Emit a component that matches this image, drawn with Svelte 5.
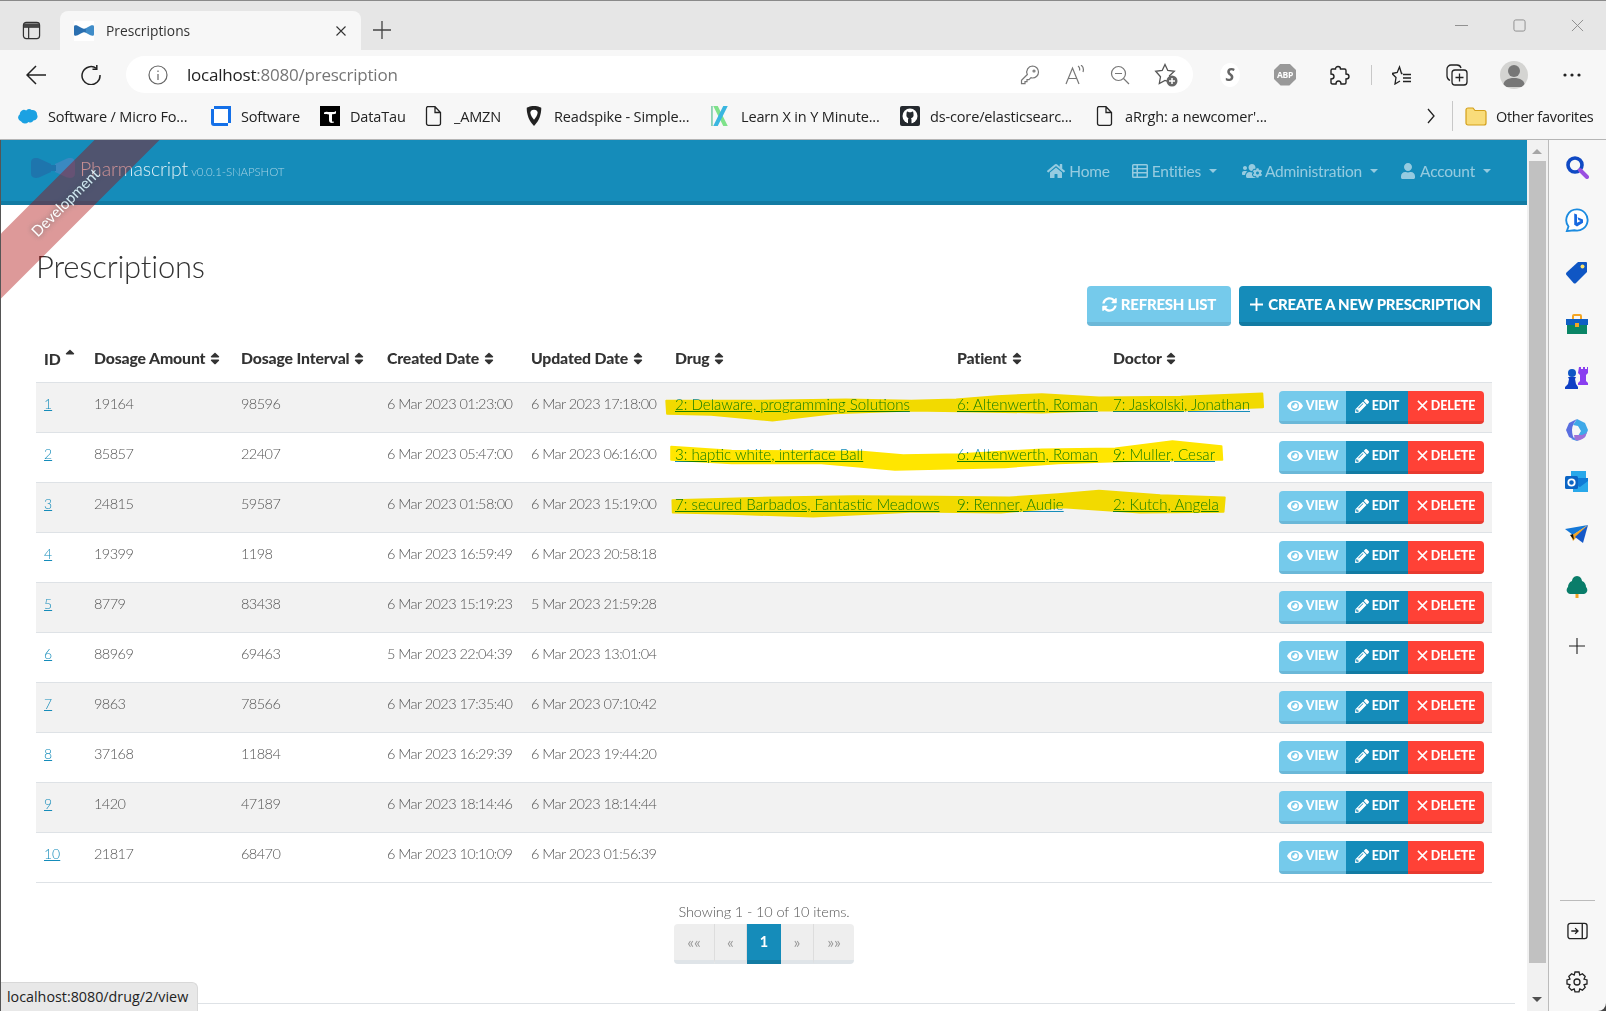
<script>
  const rows = [
    [1, 19164, 98596, '6 Mar 2023 01:23:00', '6 Mar 2023 17:18:00', '2: Delaware, programming Solutions', '6: Altenwerth, Roman', '7: Jaskolski, Jonathan'],
    [2, 85857, 22407, '6 Mar 2023 05:47:00', '6 Mar 2023 06:16:00', '3: haptic white, interface Ball', '6: Altenwerth, Roman', '9: Muller, Cesar'],
    [3, 24815, 59587, '6 Mar 2023 01:58:00', '6 Mar 2023 15:19:00', '7: secured Barbados, Fantastic Meadows', '9: Renner, Audie', '2: Kutch, Angela'],
    [4, 19399, 1198, '6 Mar 2023 16:59:49', '6 Mar 2023 20:58:18', '', '', ''],
    [5, 8779, 83438, '6 Mar 2023 15:19:23', '5 Mar 2023 21:59:28', '', '', ''],
    [6, 88969, 69463, '5 Mar 2023 22:04:39', '6 Mar 2023 13:01:04', '', '', ''],
    [7, 9863, 78566, '6 Mar 2023 17:35:40', '6 Mar 2023 07:10:42', '', '', ''],
    [8, 37168, 11884, '6 Mar 2023 16:29:39', '6 Mar 2023 19:44:20', '', '', ''],
    [9, 1420, 47189, '6 Mar 2023 18:14:46', '6 Mar 2023 18:14:44', '', '', ''],
    [10, 21817, 68470, '6 Mar 2023 10:10:09', '6 Mar 2023 01:56:39', '', '', '']
  ];
  const heads = ['Dosage Amount', 'Dosage Interval', 'Created Date', 'Updated Date', 'Drug', 'Patient', 'Doctor'];
  const sortD = 'M41 288h238c21.4 0 32.1 25.9 17 41L177 448c-9.4 9.4-24.6 9.4-33.9 0L24 329c-15.1-15.1-4.4-41 17-41zm255-105L177 64c-9.4-9.4-24.6-9.4-33.9 0L24 183c-15.1 15.1-4.4 41 17 41h238c21.4 0 32.1-25.9 17-41z';
  const eyeD = 'M572.52 241.4C518.29 135.59 410.93 64 288 64S57.68 135.64 3.48 241.41a32.35 32.35 0 0 0 0 29.19C57.71 376.41 165.07 448 288 448s230.32-71.64 284.52-177.41a32.35 32.35 0 0 0 0-29.19zM288 400a144 144 0 1 1 144-144 143.93 143.93 0 0 1-144 144zm0-240a95.31 95.31 0 0 0-25.31 3.79 47.85 47.85 0 0 1-66.9 66.9A95.78 95.78 0 1 0 288 160z';
  const penD = 'M497.9 142.1l-46.1 46.1c-4.7 4.7-12.3 4.7-17 0l-111-111c-4.7-4.7-4.7-12.3 0-17l46.1-46.1c18.7-18.7 49.1-18.7 67.9 0l60.1 60.1c18.8 18.7 18.8 49.1 0 67.9zM284.2 99.8L21.6 362.4.4 483.9c-2.9 16.4 11.4 30.6 27.8 27.8l121.5-21.3 262.6-262.6c4.7-4.7 4.7-12.3 0-17l-111-111c-4.8-4.7-12.4-4.7-17.1 0zM124.1 339.9c-5.5-5.5-5.5-14.3 0-19.8l154-154c5.5-5.5 14.3-5.5 19.8 0s5.5 14.3 0 19.8l-154 154c-5.5 5.5-14.3 5.5-19.8 0zM88 424h48v36.3l-64.5 11.3-31.1-31.1L51.7 376H88v48z';
</script>

<div class="win">
  <div class="tabs">
    <svg class="tabside" viewBox="0 0 20 20" fill="none" stroke="#333" stroke-width="1.3"><rect x="1.5" y="1.5" width="17" height="17" rx="3"/><path d="M7 6.5v12M1.5 6.5h17" /><path d="M2 2.5h16v4H2z" fill="#444" stroke="none"/></svg>
    <div class="tab">
      <span class="fav"><svg viewBox="0 0 22 12" width="21" height="11"><path d="M0 2C0 0 2 0 4 .8L10 4v4l-6 3.2C2 12 0 12 0 10z" fill="#2a6fb0"/><path d="M22 2c0-2-2-2-4-1.200L12 4v4l6 3.200c2 .8 4 .8 4-1.200z" fill="#3f8cc8"/><rect x="9" y="4" width="4" height="4" fill="#2a6fb0"/></svg></span>
      <span class="tabtitle">Prescriptions</span>
      <svg class="tabx" viewBox="0 0 10 10" stroke="#333" stroke-width="1.100"><path d="M0.500 0.500l9 9M9.500 0.500l-9 9"/></svg>
    </div>
    <svg class="tabplus" viewBox="0 0 18 18" stroke="#444" stroke-width="1.300"><path d="M9 0v18M0 9h18"/></svg>
    <div class="winctl">
      <svg viewBox="0 0 14 14" stroke="#8a8a8a" stroke-width="1" fill="none"><path d="M0 7h14"/></svg>
      <svg viewBox="0 0 14 14" stroke="#8a8a8a" stroke-width="1" fill="none"><rect x="1" y="1" width="12" height="12" rx="2"/></svg>
      <svg viewBox="0 0 14 14" stroke="#8a8a8a" stroke-width="1" fill="none"><path d="M1 1l12 12M13 1L1 13"/></svg>
    </div>
  </div>

  <div class="toolbar">
    <svg class="tb back" viewBox="0 0 20 20" fill="none" stroke="#222" stroke-width="1.500"><path d="M20 10H1M10 1l-9 9 9 9"/></svg>
    <svg class="tb reload" viewBox="0 0 20 20" fill="none" stroke="#222" stroke-width="1.500"><path d="M15.500 3.500A9 9 0 1 0 19 10"/><path d="M15.800 0v4.200h-4.300" /></svg>
    <div class="pill">
      <svg class="info" viewBox="0 0 20 20" fill="none" stroke="#666" stroke-width="1.200"><circle cx="10" cy="10" r="9"/><path d="M10 9v6M10 5.500v1.500"/></svg>
      <span class="url"><b>localhost</b>:8080/prescription</span>
      <div class="pillicons">
        <svg viewBox="0 0 20 20" fill="none" stroke="#777" stroke-width="1.200"><path d="M12.500 1a6 6 0 0 1 0 12l-1.500-.3-2 2H7v2H5v2H1.500v-3.500L7.300 9.500A6 6 0 0 1 12.500 1z"/><circle cx="14" cy="6" r="1"/></svg>
        <svg viewBox="0 0 20 20" fill="none" stroke="#777" stroke-width="1.200"><path d="M1 19L7.500 3 14 19M3.500 13.500h8M13 1c1.500 1 2 2.500 1.500 4.500M16 0c2 1.500 3 4 2 7"/></svg>
        <svg viewBox="0 0 20 20" fill="none" stroke="#777" stroke-width="1.200"><circle cx="8.500" cy="8.500" r="7"/><path d="M13.500 13.500L19 19M5 8.500h7"/></svg>
        <svg viewBox="0 0 24 24" fill="none" stroke="#555" stroke-width="1.300"><path d="M11 1.500l2.800 6 6.500.8-4.800 4.500 1.200 6.400L11 17.500l-5.700 3 1.200-6.700L1.700 8.300l6.500-.8z"/><circle cx="18" cy="18" r="5.500" fill="#666" stroke="none"/><path d="M18 15v6M15 18h6" stroke="#fff" stroke-width="1.500"/></svg>
      </div>
    </div>
    <div class="exts">
      <span class="extS">S</span>
      <span class="extA">ABP</span>
      <svg class="ic" viewBox="0 0 20 20" fill="none" stroke="#222" stroke-width="1.400"><path d="M8 1.500c1.500 0 2.500 1 2.500 2.500h4c1 0 1.500.5 1.500 1.500V9c2 0 3 1 3 2.500S18 14 16 14v3.500c0 1-.5 1.500-1.500 1.500H11c0-2-1-3-2.500-3S6 17 6 19H2.500C1.500 19 1 18.500 1 17.500V14c2 0 3-1 3-2.500S3 9 1 9V5.500c0-1 .5-1.500 1.500-1.500h3c0-1.500 1-2.500 2.500-2.500z"/></svg>
      <span class="tbdiv"></span>
      <svg class="ic" viewBox="0 0 20 20" fill="none" stroke="#222" stroke-width="1.300"><path d="M10.500 8.500h-1l-2-6.500-2.300 5.500L0 8.500l4 4L3 19l5-3M11 9.500h8M11 13h8M11 16.500h8" /></svg>
      <svg class="ic wide" viewBox="0 0 22 22" fill="none" stroke="#222" stroke-width="1.300"><rect x="6" y="6" width="15" height="15" rx="3"/><path d="M13.500 9.500v8M9.500 13.500h8M4 16.500C2 15.500 1 14 1 12V5c0-2 2-4 4-4h6c2 0 3.500 1 4 3"/></svg>
      <span class="avatar"><svg viewBox="0 0 28 28" width="28" height="28"><circle cx="14" cy="10" r="6" fill="#777"/><path d="M3 26c0-7 5-9 11-9s11 2 11 9z" fill="#777"/></svg></span>
      <svg class="dots" viewBox="0 0 18 4" fill="#222"><circle cx="2" cy="2" r="1.600"/><circle cx="9" cy="2" r="1.600"/><circle cx="16" cy="2" r="1.600"/></svg>
    </div>
  </div>

  <div class="bookmarks">
    <span class="bm"><svg viewBox="0 0 22 18" class="bi"><path d="M9 3a4 4 0 0 1 6-.5 5 5 0 0 1 6 5 4.500 4.500 0 0 1-4 6.500 4 4 0 0 1-5.500 1.500A5 5 0 0 1 3.500 15 4.500 4.500 0 0 1 2 7a4.500 4.500 0 0 1 7-4z" fill="#1ba1e2"/></svg>Software / Micro Fo...</span>
    <span class="bm"><svg viewBox="0 0 20 20" class="bi"><path d="M3 0h17v17h-3V3H3zM0 3h3v14h14v3H3a3 3 0 0 1-3-3z" fill="#1470e8"/><path d="M3 3h14v14H3z" fill="#fff"/></svg>Software</span>
    <span class="bm"><svg viewBox="0 0 20 20" class="bi"><rect width="20" height="20" fill="#000"/><path d="M4 6.500c2-1.500 4-.5 6-.5s4 .5 6-1v2.500c-1 .5-2.500 .8-4 .7v6c0 1.500 1 1.800 2 1.300v1c-3 1-5 0-5-2.500V8.500c-2-.2-3.500-.5-5-.5z" fill="#fff"/></svg>DataTau</span>
    <span class="bm"><svg viewBox="0 0 16 20" class="bi bd" fill="none" stroke="#222" stroke-width="1.300"><path d="M2 .7h7.500L15 6.500V17.500a1.800 1.800 0 0 1-1.800 1.800H2.800A1.800 1.800 0 0 1 1 17.500V2.500A1.800 1.800 0 0 1 2 .7zM9.500 .7v5.800H15"/></svg>_AMZN</span>
    <span class="bm"><svg viewBox="0 0 18 22" class="bi bp"><path d="M9 0c5 0 8 2 8 2 0 7-2 14-8 20C3 16 1 9 1 2c0 0 3-2 8-2z" fill="#222"/><path d="M9 4c3 0 4 1.500 4 3.500S11 13 9 15C7 13 5 9.500 5 7.500S6 4 9 4z" fill="#fff"/></svg>Readspike - Simple...</span>
    <span class="bm"><svg viewBox="0 0 20 22" class="bi bx"><path d="M0 0h1.200v22H0z" fill="#42b883"/><path d="M2 0h5l11 22h-5z" fill="#7fe28a"/><path d="M18 0h-5L2 22h5z" fill="#39b6e0"/></svg>Learn X in Y Minute...</span>
    <span class="bm"><svg viewBox="0 0 20 20" class="bi"><rect width="20" height="20" rx="2" fill="#24292e"/><circle cx="10" cy="10" r="7.500" fill="#fff"/><path d="M6.500 8c0-1 .3-2 .5-2.500.5 0 1.500.4 2 .8a6 6 0 0 1 2 0c.5-.4 1.500-.8 2-.8.2.5.5 1.500.5 2.500.6 2.500-1 4-2.500 4.200.3.4.5 1 .5 1.500V18H8v-4.300c0-.5.200-1.100.5-1.500C7.500 12 5.900 10.500 6.500 8z" fill="#24292e"/></svg>ds-core/elasticsearc...</span>
    <span class="bm"><svg viewBox="0 0 16 20" class="bi bd" fill="none" stroke="#222" stroke-width="1.300"><path d="M2 .7h7.500L15 6.500V17.500a1.800 1.800 0 0 1-1.800 1.800H2.800A1.800 1.800 0 0 1 1 17.500V2.500A1.800 1.800 0 0 1 2 .7zM9.500 .7v5.800H15"/></svg>aRrgh: a newcomer'...</span>
    <svg class="chev" viewBox="0 0 8 16" fill="none" stroke="#222" stroke-width="1.300"><path d="M1 1l6 7-6 7"/></svg>
    <span class="tbdiv thin"></span>
    <span class="bm other"><svg viewBox="0 0 22 20" class="bi"><path d="M1 4a2 2 0 0 1 2-2h5l2 2.500h9a2 2 0 0 1 2 2V17a2 2 0 0 1-2 2H3a2 2 0 0 1-2-2z" fill="#f9dc7a" stroke="#d39f19" stroke-width="1.200"/></svg>Other favorites</span>
  </div>

  <div class="main">
    <div class="page">
      <nav class="navbar">
        <div class="brand">
          <svg class="logo" viewBox="0 0 44 20"><path d="M0 5C0 0 4-.5 8 .5L20 6v8L8 19.500C4 20.500 0 20 0 15z" fill="#1f74ad"/><path d="M44 5c0-5-4-5.500-8-4.500L24 6v8l12 5.500c4 1 8 .5 8-4.500z" fill="#3c89c2"/><rect x="19" y="7" width="6" height="6" fill="#1f74ad"/></svg>
          <span class="bname">Pharmascript</span>
          <span class="bver">v0.0.1-SNAPSHOT</span>
        </div>
        <div class="navlinks">
          <span class="nl home"><svg viewBox="0 0 576 512" class="ni"><path d="M280.37 148.26L96 300.11V464a16 16 0 0 0 16 16l112.06-.29a16 16 0 0 0 15.92-16V368a16 16 0 0 1 16-16h64a16 16 0 0 1 16 16v95.64a16 16 0 0 0 16 16.05L464 480a16 16 0 0 0 16-16V300L295.67 148.26a12.19 12.19 0 0 0-15.3 0zM571.6 251.47L488 182.56V44.05a12 12 0 0 0-12-12h-56a12 12 0 0 0-12 12v72.61L318.47 43a48 48 0 0 0-61 0L4.34 251.47a12 12 0 0 0-1.6 16.9l25.5 31A12 12 0 0 0 45.15 301l235.22-193.74a12.19 12.19 0 0 1 15.3 0L530.9 301a12 12 0 0 0 16.9-1.6l25.5-31a12 12 0 0 0-1.7-16.93z"/></svg>Home</span>
          <span class="nl ent"><svg viewBox="0 0 16 14" class="ni th"><path d="M1.500 0h13A1.500 1.500 0 0 1 16 1.500v11a1.500 1.500 0 0 1-1.500 1.500h-13A1.500 1.500 0 0 1 0 12.500v-11A1.500 1.500 0 0 1 1.500 0zM1.500 1.500v2.500h3V1.500zm4.500 0v2.500h8.500V1.500zM1.500 5.500V8h3V5.500zm4.500 0V8h8.500V5.500zM1.500 9.500v3h3v-3zm4.500 0v3h8.500v-3z" fill-rule="evenodd"/></svg>Entities<i class="caret"></i></span>
          <span class="nl adm"><svg viewBox="0 0 640 512" class="ni uc"><path d="M610.5 341.3c2.6-14.1 2.6-28.5 0-42.6l25.8-14.9c3-1.7 4.3-5.2 3.3-8.5-6.7-21.6-18.2-41.2-33.2-57.4-2.3-2.5-6-3.1-9-1.4l-25.8 14.9c-10.9-9.3-23.4-16.5-36.9-21.3v-29.8c0-3.4-2.4-6.4-5.7-7.1-22.3-5-45-4.8-66.2 0-3.3.7-5.7 3.7-5.7 7.1v29.8c-13.5 4.8-26 12-36.9 21.3l-25.8-14.9c-2.9-1.7-6.7-1.1-9 1.4-15 16.2-26.5 35.8-33.2 57.4-1 3.3.4 6.8 3.3 8.5l25.8 14.9c-2.6 14.1-2.6 28.5 0 42.6l-25.8 14.9c-3 1.7-4.3 5.2-3.3 8.5 6.7 21.6 18.2 41.1 33.2 57.4 2.3 2.5 6 3.1 9 1.4l25.8-14.9c10.9 9.3 23.4 16.5 36.9 21.3v29.8c0 3.4 2.4 6.4 5.7 7.1 22.3 5 45 4.8 66.2 0 3.3-.7 5.7-3.7 5.7-7.1v-29.8c13.5-4.8 26-12 36.9-21.3l25.8 14.9c2.9 1.7 6.7 1.1 9-1.4 15-16.2 26.5-35.8 33.2-57.4 1-3.3-.4-6.8-3.3-8.5l-25.8-14.9zM496 368.5c-26.8 0-48.5-21.8-48.5-48.5s21.8-48.5 48.5-48.5 48.5 21.8 48.5 48.5-21.7 48.5-48.5 48.5zM96 224c35.3 0 64-28.7 64-64s-28.7-64-64-64-64 28.7-64 64 28.7 64 64 64zm224 32c1.9 0 3.7-.5 5.6-.6 8.3-21.7 20.5-42.1 36.3-59.2 7.4-8 17.9-12.6 28.9-12.6 6.9 0 13.7 1.8 19.6 5.3l7.9 4.6c.8-.5 1.6-.9 2.4-1.4 7-14.6 11.2-30.8 11.2-48 0-61.9-50.1-112-112-112S208 82.1 208 144c0 61.9 50.1 112 112 112zm105.2 194.5c-2.3-1.2-4.6-2.6-6.8-3.9-8.2 4.8-15.3 9.8-27.5 9.8-10.9 0-21.4-4.6-28.9-12.6-18.3-19.8-32.3-43.9-40.2-69.6-10.7-34.5 24.9-49.7 25.8-50.3-.1-2.6-.1-5.2 0-7.8l-7.9-4.6c-3.8-2.2-7-5-9.8-8.1-3.3.2-6.5.6-9.8.6-24.6 0-47.6-6-68.5-16h-8.3C179.6 288 128 339.6 128 403.2V432c0 26.5 21.5 48 48 48h255.4c-3.7-6-6.2-12.8-6.2-20.3v-9.2zM173.1 274.6C161.5 263.1 145.6 256 128 256H64c-35.3 0-64 28.7-64 64v32c0 17.7 14.3 32 32 32h65.9c6.3-47.4 34.9-87.3 75.2-109.4z"/></svg>Administration<i class="caret"></i></span>
          <span class="nl acc"><svg viewBox="0 0 448 512" class="ni ua"><path d="M224 256c70.7 0 128-57.3 128-128S294.7 0 224 0 96 57.3 96 128s57.3 128 128 128zm89.6 32h-16.7c-22.2 10.2-46.9 16-72.9 16s-50.6-5.8-72.9-16h-16.7C60.2 288 0 348.2 0 422.4V464c0 26.5 21.500 48 48 48h352c26.500 0 48-21.500 48-48v-41.600c0-74.200-60.200-134.400-134.400-134.400z"/></svg>Account<i class="caret"></i></span>
        </div>
      </nav>

      <div class="ribbon">Development</div>

      <div class="content">
        <h2>Prescriptions</h2>
        <div class="actions">
          <span class="btn info"><svg viewBox="0 0 512 512" class="bic"><path d="M370.72 133.28C339.458 104.008 298.888 87.962 255.848 88c-77.458.068-144.328 53.178-162.791 126.85-1.344 5.363-6.122 9.15-11.651 9.15H24.103c-7.498 0-13.194-6.807-11.807-14.176C33.933 94.924 134.813 8 256 8c66.448 0 126.791 26.136 171.315 68.685L463.03 40.97C478.149 25.851 504 36.559 504 57.941V192c0 13.255-10.745 24-24 24H345.941c-21.382 0-32.09-25.851-16.971-40.971l41.75-41.749zM32 296h134.059c21.382 0 32.09 25.851 16.971 40.971l-41.75 41.75c31.262 29.273 71.835 45.319 114.876 45.28 77.418-.07 144.315-53.144 162.787-126.849 1.344-5.363 6.122-9.15 11.651-9.15h57.304c7.498 0 13.194 6.807 11.807 14.176C478.067 417.076 377.187 504 256 504c-66.448 0-126.791-26.136-171.315-68.685L48.97 471.03C33.851 486.149 8 475.441 8 454.059V320c0-13.255 10.745-24 24-24z"/></svg>REFRESH LIST</span>
          <span class="btn primary"><svg viewBox="0 0 14 14" class="bic plus" stroke="#fff" stroke-width="2"><path d="M7 0v14M0 7h14"/></svg>CREATE A NEW PRESCRIPTION</span>
        </div>

        <div class="tablewrap">
          <table>
            <colgroup>
              <col class="c1" /><col class="c2" /><col class="c3" /><col class="c4" /><col class="c5" /><col class="c6" /><col class="c7" /><col class="c8" /><col />
            </colgroup>
            <thead>
              <tr>
                <th>ID <svg viewBox="0 0 320 512" class="sort up"><path d="M279 224H41c-21.4 0-32.1-25.9-17-41L143 64c9.4-9.4 24.6-9.4 33.9 0l119 119c15.2 15.1 4.5 41-16.9 41z"/></svg></th>
                {#each heads as h}
                  <th>{h} <svg viewBox="0 0 320 512" class="sort"><path d={sortD}/></svg></th>
                {/each}
                <th></th>
              </tr>
            </thead>
            <tbody>
              {#each rows as r}
                <tr>
                  <td class="idc"><a href="#top">{r[0]}</a></td>
                  <td>{r[1]}</td>
                  <td>{r[2]}</td>
                  <td>{r[3]}</td>
                  <td>{r[4]}</td>
                  <td>{#if r[5]}<a href="#top">{r[5]}</a>{/if}</td>
                  <td>{#if r[6]}<a href="#top">{r[6]}</a>{/if}</td>
                  <td>{#if r[7]}<a href="#top">{r[7]}</a>{/if}</td>
                  <td>
                    <div class="group">
                      <span class="gb view"><svg viewBox="0 0 576 512" class="gi"><path d={eyeD}/></svg>VIEW</span>
                      <span class="gb edit"><svg viewBox="0 0 512 512" class="gi pen"><path d={penD}/></svg>EDIT</span>
                      <span class="gb del"><svg viewBox="0 0 12 12" class="gi x" stroke="#fff" stroke-width="1.700"><path d="M1 1l10 10M11 1L1 11"/></svg>DELETE</span>
                    </div>
                  </td>
                </tr>
              {/each}
            </tbody>
          </table>
          <svg class="marks" viewBox="0 0 1568 450" preserveAspectRatio="none" fill="#ffe600" stroke="#ffe600" stroke-width="5" stroke-linejoin="round">
            <polygon points="40,62 250,62 480,58 640,62 750,58 850,48 960,42 1100,52 1300,50 1500,40 1502,82 1300,92 1090,92 960,98 800,95 640,92 450,100 300,122 150,105 42,102"/>
            <polygon points="52,200 200,212 520,215 620,225 760,222 960,208 1140,205 1280,183 1400,198 1402,240 1200,242 1000,250 870,262 600,270 420,250 200,250 52,240"/>
            <polygon points="55,360 300,352 500,348 700,350 880,352 1000,342 1100,332 1250,345 1408,352 1405,396 1200,398 1010,382 860,398 650,395 400,410 200,402 56,398"/>
          </svg>
        </div>

        <div class="showing">Showing 1 - 10 of 10 items.</div>
        <div class="pager">
          <span class="pg w1">««</span>
          <span class="pg w2">«</span>
          <span class="pg active">1</span>
          <span class="pg w3">»</span>
          <span class="pg w4">»»</span>
        </div>
        <hr />
      </div>
      <div class="status">localhost:8080/drug/2/view</div>
    </div>

    <div class="scroll">
      <i class="arr up"></i>
      <div class="thumb"></div>
      <i class="arr dn"></i>
    </div>

    <aside class="side">
      <div class="sideicons">
        <svg viewBox="0 0 24 24"><circle cx="10" cy="10" r="7" fill="none" stroke="#0f49c4" stroke-width="3.600"/><path d="M15 15l7 7" stroke="#9a4fe0" stroke-width="4" stroke-linecap="round"/></svg>
        <svg viewBox="0 0 26 26"><path d="M13 1.500a11.500 11.500 0 1 1-3 22.600L2 25l1.800-5A11.500 11.500 0 0 1 13 1.500z" fill="#fff" stroke="#1b8be0" stroke-width="2"/><path d="M10 6l3 1v9l4-2-2.500-1-1-3 6 2.500v3.500l-6.500 4-3-1.800z" fill="#1668e0"/></svg>
        <svg viewBox="0 0 24 24"><path d="M13 2h8a1 1 0 0 1 1 1v9L11 23a2 2 0 0 1-2.500 0L1.500 15a2 2 0 0 1 0-2.500z" fill="#0f56c4"/><circle cx="17.500" cy="6.500" r="2" fill="#fde36a"/></svg>
        <svg viewBox="0 0 24 24"><path d="M8 6V3a1 1 0 0 1 1-1h6a1 1 0 0 1 1 1v3" fill="none" stroke="#f5a623" stroke-width="2"/><rect x="1" y="6" width="22" height="6" fill="#0f5fc4"/><rect x="2" y="12" width="20" height="9" fill="#0a8566"/><rect x="10" y="10" width="4" height="4" fill="#f5a623"/></svg>
        <svg viewBox="0 0 24 24"><path d="M14 2h2v2h2V2h2v2h2V2h1v6l-2 2v6l2 2v2H13v-2l2-2v-6l-2-2z" fill="#8a3ff0"/><circle cx="7" cy="8" r="4" fill="#0f56c4"/><path d="M3 12h8l-1 2 1 5 2 3v2H0v-2l3-3 1-5z" fill="#0f3fc4"/></svg>
        <svg viewBox="0 0 24 24"><path d="M12 1l8 4 3 7-3 7-8 4-6-2 7-3 3-5-3-5-5-1z" fill="#3fa9e8"/><path d="M12 1L4 5 1 12l3 7 6 3c-2-3-3-6-3-10s2-8 5-11z" fill="#5a6fe0"/><path d="M10 22c3 1 7 0 10-3l3-7c-1 3-4 5-8 5h-6z" fill="#a070d8"/></svg>
        <svg viewBox="0 0 24 24"><path d="M6 1h15v7H6z" fill="#28a8ea"/><path d="M8 8h15v14H8z" fill="#0f7bd6"/><path d="M8 14l7 3 8-6v11H8z" fill="#28a8ea"/><rect x="0" y="6" width="13" height="13" rx="1.500" fill="#0a64c4"/><circle cx="6.500" cy="12.500" r="3.200" fill="none" stroke="#fff" stroke-width="1.800"/></svg>
        <svg viewBox="0 0 24 24"><path d="M0 6L23 2 8 12z" fill="#1478d8"/><path d="M23 2L6 13l2 5z" fill="#f5a623"/><path d="M23 2L18 20 10 14z" fill="#1458c8"/><path d="M5 12l3-1 1 6z" fill="#111"/></svg>
        <svg viewBox="0 0 24 24"><path d="M12 1c3 0 5 3 5 5 3 1 4 4 4 6 2 2 2 6-2 7H5c-4-1-4-5-2-7 0-2 1-5 4-6 0-2 2-5 5-5z" fill="#0a7d6a"/><path d="M10.500 19h3v4h-3z" fill="#f5a623"/></svg>
        <svg class="sp" viewBox="0 0 16 16" stroke="#222" stroke-width="1.100"><path d="M8 0v16M0 8h16"/></svg>
      </div>
      <div class="sidebot">
        <span class="sep"></span>
        <svg viewBox="0 0 22 18" fill="none" stroke="#222" stroke-width="1.400"><rect x="1" y="1" width="20" height="16" rx="2.500"/><path d="M16 1v16"/><path d="M4.500 9h7M8.500 6l3 3-3 3"/></svg>
        <svg viewBox="0 0 22 22" fill="none" stroke="#222" stroke-width="1.300"><circle cx="11" cy="11" r="3"/><path d="M9 1h4l.8 3 2.600-1.300 2.800 2.800L18 8.100l3 .9v4l-3 .8 1.200 2.600-2.800 2.800-2.600-1.200-.8 2.800H9l-.8-2.800-2.600 1.200-2.800-2.800L4 13.800 1 13V9l3-.9-1.200-2.600 2.800-2.800L8.200 4z"/></svg>
      </div>
    </aside>
  </div>
</div>

<style>
  :global(html), :global(body) { margin: 0; height: 100%; overflow: hidden; }
  :global(body) { background: #fff; }
  .win { width: 1606px; height: 1011px; display: flex; flex-direction: column; overflow: hidden; font-family: "Open Sans", "Noto Sans", sans-serif; color: #222; }

  .tabs { height: 50px; flex: none; background: #e6e6e6; border-top: 1px solid #8a8a8a; box-sizing: border-box; display: flex; align-items: flex-end; position: relative; }
  .tabside { width: 19px; height: 19px; margin: 0 0 10px 22px; flex: none; }
  .tab { width: 301px; height: 39px; margin-left: 19px; background: #f7f7f7; border-radius: 8px 8px 0 0; display: flex; align-items: center; padding-left: 14px; box-sizing: border-box; flex: none; }
  .fav { width: 20px; height: 20px; background: #fff; display: flex; align-items: center; justify-content: center; flex: none; }
  .tabtitle { font-size: 13.8px; margin-left: 12px; color: #333; width: 230px; }
  .tabx { width: 10px; height: 10px; flex: none; }
  .tabplus { width: 18px; height: 18px; margin: 0 0 11px 12px; flex: none; }
  .winctl { margin-left: auto; align-self: flex-start; display: flex; gap: 45px; margin-top: 18px; padding-right: 22px; }
  .winctl svg { width: 13px; height: 13px; }

  .toolbar { height: 46px; padding-top: 3px; box-sizing: border-box; flex: none; background: #f7f7f7; display: flex; align-items: center; position: relative; }
  .tb { width: 20px; height: 20px; flex: none; }
  .back { margin-left: 26px; }
  .reload { margin-left: 35px; }
  .pill { width: 1067px; height: 37px; margin-left: 25px; background: #fff; border-radius: 19px; display: flex; align-items: center; flex: none; }
  .info { width: 20px; height: 20px; margin-left: 22px; flex: none; }
  .url { margin-left: 19px; font-size: 17px; color: #767676; letter-spacing: -0.22px; }
  .url b { font-weight: 400; color: #222; }
  .pillicons { margin-left: auto; display: flex; align-items: center; gap: 25px; padding-right: 15px; }
  .pillicons svg { width: 20px; height: 20px; }
  .pillicons svg:last-child { width: 24px; height: 24px; margin-left: -1px; }
  .exts { display: flex; align-items: center; flex: none; margin-left: 27px; position: relative; }
  .extS { width: 20px; height: 24px; background: #fff; border-radius: 50%; color: #666; font: italic 700 17px "Open Sans", sans-serif; text-align: center; line-height: 24px; }
  .extA { width: 22px; height: 22px; margin-left: 34px; background: #999; clip-path: polygon(30% 0, 70% 0, 100% 30%, 100% 70%, 70% 100%, 30% 100%, 0 70%, 0 30%); color: #fff; font-size: 8.500px; font-weight: 700; text-align: center; line-height: 22px; letter-spacing: -0.3px; }
  .ic { width: 20px; height: 20px; flex: none; margin-left: 34px; }
  .tbdiv { width: 1px; height: 20px; background: #c8c8c8; flex: none; margin-left: 21px; }
  .tbdiv + .ic { margin-left: 20px; }
  .ic.wide { width: 22px; height: 22px; }
  .avatar { width: 28px; height: 28px; background: #d4d4d2; border-radius: 50%; overflow: hidden; margin-left: 32px; flex: none; }
  .dots { margin-left: 35px; width: 18px; height: 4px; flex: none; }

  .bookmarks { height: 44px; flex: none; background: #f7f7f7; border-bottom: 1px solid #b5b5b5; box-sizing: border-box; display: grid; grid-template-columns: 193px 109px 105px 100px 186px 189px 196px 331px 25px 13px auto; padding: 0 0 3px 18px; align-items: center; }
  .bm { display: flex; align-items: center; font-size: 14.500px; white-space: nowrap; letter-spacing: -0.15px; color: #222; }
  .bi { width: 20px; height: 20px; flex: none; margin-right: 10px; }
  .bi.bd { width: 17px; margin-right: 12px; }
  .bi.bp { width: 18px; margin-right: 11px; }
  .bi.bx { width: 19px; margin-right: 11px; }
  .other .bi { width: 22px; margin-right: 9px; }
  .other { letter-spacing: -0.3px; }
  .chev { width: 8px; height: 16px; }
  .thin { margin: 0; height: 30px; }

  .main { flex: 1; min-height: 0; display: flex; background: #444; }
  .page { width: 1527px; flex: none; position: relative; overflow: hidden; background: #fff; border-left: 1px solid #555; box-sizing: border-box; font-family: Lato, "Open Sans", sans-serif; }

  .navbar { height: 65px; box-sizing: border-box; background: #158cba; border-bottom: 4px solid #127ba3; display: flex; align-items: center; justify-content: space-between; }
  .brand { display: flex; align-items: baseline; margin-left: 30px; padding-bottom: 5px; position: relative; }
  .logo { width: 44px; height: 20px; align-self: center; opacity: 0.95; margin-right: 5px; }
  .bname { font-size: 19.500px; font-weight: 300; color: rgba(255,255,255,.85); letter-spacing: -0.1px; }
  .bver { font-size: 11.500px; font-weight: 300; color: rgba(255,255,255,.6); margin-left: 3px; letter-spacing: -0.1px; }
  .navlinks { display: flex; align-items: center; margin-right: 36px; }
  .nl { display: flex; align-items: center; color: rgba(255,255,255,.55); font-size: 15.500px; font-weight: 400; letter-spacing: -0.2px; }
  .ni { height: 16px; width: 18px; fill: rgba(255,255,255,.55); margin-right: 4px; flex: none; }
  .ni.th { width: 16px; height: 14px; }
  .ni.uc { width: 20px; margin-right: 3px; }
  .ni.ua { width: 16px; }
  .ent { margin-left: 22px; }
  .adm { margin-left: 25px; }
  .acc { margin-left: 22px; }
  .home { margin-right: 0; }
  .caret { display: inline-block; margin-left: 8px; border: 4px solid transparent; border-top-color: rgba(255,255,255,.55); border-bottom: 0; }

  .ribbon { position: absolute; left: -56px; top: 39px; width: 240px; height: 46px; line-height: 46px; text-align: center; background: rgba(170,0,0,.5); opacity: .8; color: #fff; font-size: 15px; transform: rotate(-45deg); text-shadow: 0 0 5px #444; z-index: 5; }

  .content { padding: 44px 35px 0 35px; }
  h2 { margin: 0; font-size: 31px; line-height: 34px; font-weight: 300; color: #333; letter-spacing: -0.2px; }
  .actions { display: flex; justify-content: flex-end; gap: 8px; margin-top: 3px; }
  .btn { height: 40px; box-sizing: border-box; border-radius: 4px; border-bottom: 4px solid; display: flex; align-items: center; justify-content: center; color: #fff; font-size: 15px; font-weight: 900; letter-spacing: -0.25px; white-space: nowrap; }
  .btn.info { width: 144px; background: #75caeb; border-color: #6bb8d8; }
  .btn.primary { width: 253px; background: #158cba; border-color: #127ba3; }
  .bic { width: 15px; height: 15px; fill: #fff; margin-right: 4px; flex: none; }
  .bic.plus { width: 13px; height: 13px; margin-right: 5px; }

  .tablewrap { position: relative; margin-top: 8px; }
  table { width: 100%; table-layout: fixed; border-collapse: collapse; font-size: 14.500px; color: #555; font-weight: 300; }
  .c1 { width: 50px; } .c2 { width: 147px; } .c3 { width: 146px; } .c4 { width: 144px; } .c5 { width: 144px; } .c6 { width: 282px; } .c7 { width: 156px; } .c8 { width: 165px; }
  th { height: 48px; padding: 0 8px; text-align: left; font-weight: 900; color: #333; font-size: 15.800px; white-space: nowrap; letter-spacing: -0.15px; border-bottom: 1px solid #dee2e6; box-sizing: border-box; }
  .sort { width: 12px; height: 15px; fill: #333; vertical-align: -2px; margin-left: 0; }
  .sort.up { vertical-align: 2px; }
  td { height: 50px; padding: 0 8px; border-bottom: 1px solid #dee2e6; white-space: nowrap; box-sizing: border-box; letter-spacing: -0.56px; }
  td:not(:last-child) { padding-bottom: 7px; }
  tbody tr:nth-child(odd) td { background: #f2f2f2; }
  a { color: #158cba; text-decoration: underline; font-size: 15.100px; letter-spacing: 0; }
  .idc a { font-size: 14px; }
  .group { display: flex; justify-content: flex-end; }
  .gb { height: 33px; box-sizing: border-box; border-bottom: 3px solid; display: flex; align-items: center; justify-content: center; color: #fff; font-size: 12.500px; font-weight: 900; letter-spacing: -0.1px; }
  .view { width: 67px; background: #75caeb; border-color: #6bb8d8; border-radius: 4px 0 0 4px; }
  .edit { width: 62px; background: #158cba; border-color: #127ba3; }
  .del { width: 76px; background: #ff4136; border-color: #e83a30; border-radius: 0 4px 4px 0; }
  .gi { width: 16px; height: 14px; fill: #fff; margin-right: 3px; flex: none; }
  .gi.pen { width: 14px; }
  .gi.x { width: 11px; height: 11px; }
  .marks { position: absolute; left: 614px; top: 46px; width: 640px; height: 150px; mix-blend-mode: multiply; pointer-events: none; }

  .showing { margin-top: 17px; text-align: center; font-size: 14.500px; line-height: 24px; font-weight: 300; color: #555; letter-spacing: -0.1px; }
  .pager { display: flex; justify-content: center; }
  .pg { height: 40px; box-sizing: border-box; background: #eee; border-bottom: 4px solid #dfe4e8; border-right: 1px solid #ddd; color: #999; font-size: 16px; display: flex; align-items: center; justify-content: center; }
  .w1 { width: 41px; border-radius: 4px 0 0 4px; }
  .w2 { width: 32px; }
  .active { width: 34px; background: #158cba; border-color: #127ba3; border-right: none; color: #fff; font-weight: 700; font-size: 14.500px; }
  .w3 { width: 33px; }
  .w4 { width: 40px; border-radius: 0 4px 4px 0; border-right: none; }
  hr { margin: 39px -23px 0 0; border: 0; border-top: 1px solid #dee2e6; }

  .status { position: absolute; left: 0; bottom: 0; width: 197px; height: 29px; box-sizing: border-box; padding-left: 6px; background: #e8e8e8; border-top: 1px solid #d8d8d8; border-right: 1px solid #d8d8d8; border-radius: 0 6px 0 0; font: 14.300px/28px "Open Sans", sans-serif; color: #222; z-index: 6; white-space: nowrap; }

  .scroll { width: 21px; flex: none; background: #f1f1f1; display: flex; flex-direction: column; align-items: flex-start; }
  .thumb { width: 17px; margin-left: 2px; height: 802px; background: #c1c1c1; }
  .arr { display: block; margin-left: 5px; border-left: 5px solid transparent; border-right: 5px solid transparent; }
  .arr.up { border-bottom: 5px solid #a5a5a5; margin-top: 9px; margin-bottom: 7px; }
  .arr.dn { border-top: 5px solid #505050; margin-top: 34px; }

  .side { width: 58px; flex: none; background: #f7f7f7; border-left: 1px solid #bbb; border-radius: 0 0 8px 0; box-sizing: border-box; display: flex; flex-direction: column; align-items: center; justify-content: space-between; padding: 15px 1px 18px 0; }
  .sideicons { display: flex; flex-direction: column; align-items: center; gap: 28.500px; }
  .sideicons svg { width: 24px; height: 24px; flex: none; }
  .sideicons .sp { width: 16px; height: 16px; margin-top: 10px; }
  .sidebot { display: flex; flex-direction: column; align-items: center; }
  .sep { width: 35px; height: 1px; background: #bbb; margin-bottom: 21px; }
  .sidebot svg { width: 21px; height: 18px; }
  .sidebot svg:last-child { width: 22px; height: 22px; margin-top: 31px; }
</style>
